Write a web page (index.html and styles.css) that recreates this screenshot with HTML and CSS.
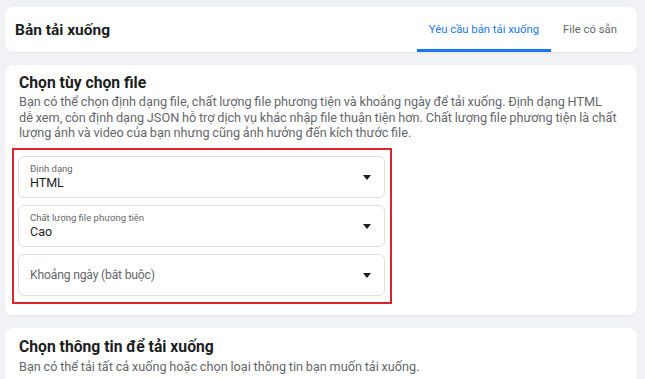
FILE: index.html
```html
<!DOCTYPE html>
<html lang="vi">
<head>
  <meta charset="UTF-8" />
  <meta name="viewport" content="width=device-width, initial-scale=1.0"/>
  <title>Bản tải xuống</title>
  <link rel="stylesheet" href="styles.css">
</head>
<body>
<div class="page">
  <div class="topbar">
    <h1>Bản tải xuống</h1>
    <nav class="tabs">
      <a class="tab active" href="#">Yêu cầu bản tải xuống</a>
      <a class="tab" href="#">File có sẵn</a>
    </nav>
  </div>

  <div class="card">
    <h2>Chọn tùy chọn file</h2>
    <p>Bạn có thể chọn định dạng file, chất lượng file phương tiện và khoảng ngày để tải xuống. Định dạng HTML dễ&nbsp;xem, còn định dạng JSON hỗ trợ dịch vụ khác nhập file thuận tiện hơn. Chất lượng file phương tiện là chất lượng ảnh và video của bạn nhưng cũng ảnh hưởng đến kích thước file.</p>

    <div class="options">
      <div class="select">
        <div class="select-text">
          <span class="select-label">Định dạng</span>
          <span class="select-value">HTML</span>
        </div>
        <span class="caret"></span>
      </div>
      <div class="select">
        <div class="select-text">
          <span class="select-label">Chất lượng file phương tiện</span>
          <span class="select-value">Cao</span>
        </div>
        <span class="caret"></span>
      </div>
      <div class="select">
        <div class="select-text">
          <span class="select-placeholder">Khoảng ngày (bắt buộc)</span>
        </div>
        <span class="caret"></span>
      </div>
    </div>
  </div>

  <div class="card card-last">
    <h2>Chọn thông tin để tải xuống</h2>
    <p>Bạn có thể tải tất cả xuống hoặc chọn loại thông tin bạn muốn tải xuống.</p>
  </div>
</div>
</body>
</html>
```

FILE: styles.css
```css
body {
  margin: 0;
  background-color: #f0f2f5;
  font-family: Roboto, "Noto Sans", Arial, sans-serif;
  color: #1c1e21;
}
.page {
  padding: 7px 8px 0 5px;
}
.topbar {
  display: flex;
  justify-content: space-between;
  align-items: stretch;
  height: 45px;
  padding: 0 8px 0 10px;
  background: white;
  border-radius: 8px;
  box-shadow: 0 1px 2px rgba(0,0,0,0.06);
}
.topbar h1 {
  margin: 0;
  align-self: center;
  font-size: 15.5px;
  font-weight: bold;
}
.tabs {
  display: flex;
}
.tab {
  display: flex;
  align-items: center;
  padding: 3px 12px 0;
  border-bottom: 3px solid transparent;
  font-size: 11.3px;
  color: #65676b;
  text-decoration: none;
}
.tab.active {
  color: #1877f2;
  border-bottom-color: #1877f2;
}
.card {
  margin-top: 13px;
  padding: 7px 8px 11px 14px;
  background: white;
  border-radius: 8px;
  box-shadow: 0 1px 2px rgba(0,0,0,0.06);
}
.card-last {
  padding-top: 8px;
}
.card h2 {
  margin: 0;
  font-size: 15.7px;
  line-height: 22px;
  font-weight: bold;
}
.card p {
  margin: 0;
  font-size: 12.7px;
  line-height: 15.7px;
  word-spacing: -0.4px;
  color: #65676b;
}
.card-last p {
  margin-top: 1px;
}
.options {
  width: 367px;
  margin: 7px 0 0 -7px;
  padding: 6px 5px 6px 4px;
  border: 2px solid #d9232e;
  display: flex;
  flex-direction: column;
  gap: 7px;
}
.select {
  display: flex;
  align-items: center;
  justify-content: space-between;
  height: 42px;
  padding: 0 13px 0 11px;
  border: 1px solid #dddfe2;
  border-radius: 6px;
  box-sizing: border-box;
}
.select-text {
  display: flex;
  flex-direction: column;
}
.select-label {
  font-size: 9.5px;
  line-height: 12px;
  color: #65676b;
}
.select-value {
  font-size: 12.5px;
  line-height: 16px;
}
.select-placeholder {
  font-size: 12.2px;
  letter-spacing: -0.2px;
  color: #65676b;
}
.caret {
  width: 0;
  height: 0;
  border-left: 4.5px solid transparent;
  border-right: 4.5px solid transparent;
  border-top: 5px solid #1c1e21;
}
```
